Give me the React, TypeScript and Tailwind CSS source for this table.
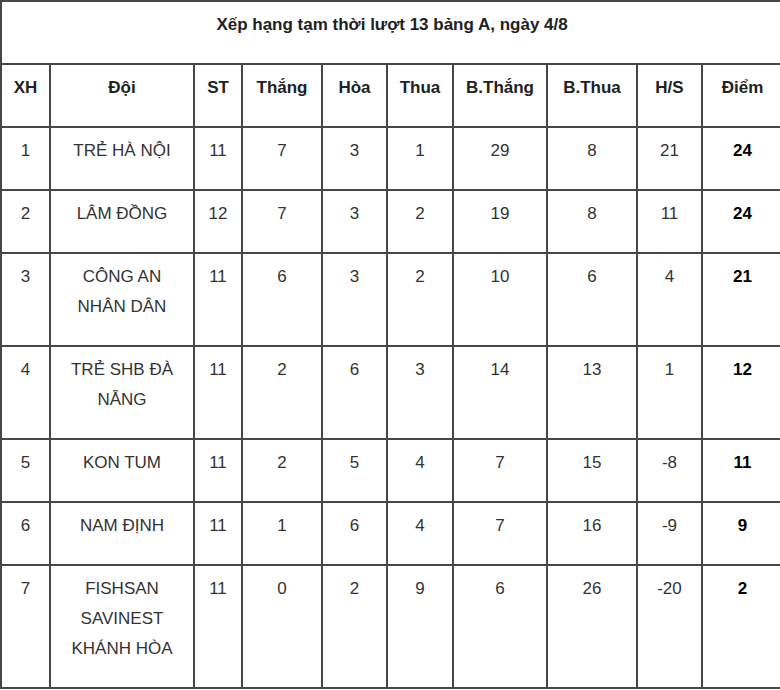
const rows = [
  { xh: "1", doi: ["TRẺ HÀ NỘI"], st: "11", w: "7", d: "3", l: "1", gf: "29", ga: "8", hs: "21", pts: "24" },
  { xh: "2", doi: ["LÂM ĐỒNG"], st: "12", w: "7", d: "3", l: "2", gf: "19", ga: "8", hs: "11", pts: "24" },
  { xh: "3", doi: ["CÔNG AN", "NHÂN DÂN"], st: "11", w: "6", d: "3", l: "2", gf: "10", ga: "6", hs: "4", pts: "21" },
  { xh: "4", doi: ["TRẺ SHB ĐÀ", "NẴNG"], st: "11", w: "2", d: "6", l: "3", gf: "14", ga: "13", hs: "1", pts: "12" },
  { xh: "5", doi: ["KON TUM"], st: "11", w: "2", d: "5", l: "4", gf: "7", ga: "15", hs: "-8", pts: "11" },
  { xh: "6", doi: ["NAM ĐỊNH"], st: "11", w: "1", d: "6", l: "4", gf: "7", ga: "16", hs: "-9", pts: "9" },
  { xh: "7", doi: ["FISHSAN", "SAVINEST", "KHÁNH HÒA"], st: "11", w: "0", d: "2", l: "9", gf: "6", ga: "26", hs: "-20", pts: "2" },
];

const headers = ["XH", "Đội", "ST", "Thắng", "Hòa", "Thua", "B.Thắng", "B.Thua", "H/S", "Điểm"];
const widths = [49, 144, 48, 80, 65, 66, 94, 90, 65, 81];

const cell = "border-2 border-[#474747] align-top text-center px-1 pt-[8px] pb-[23px] leading-[30px]";

export default function App() {
  return (
    <div className="w-[780px] h-[690px] overflow-hidden bg-white" style={{ fontFamily: '"Liberation Sans", Arial, sans-serif' }}>
      <table className="table-fixed border-collapse text-[17px] text-[#333]" style={{ width: 782 }}>
        <colgroup>
          {widths.map((w, i) => (
            <col key={i} style={{ width: w }} />
          ))}
        </colgroup>
        <tbody>
          <tr>
            <td colSpan={10} className={`${cell} font-bold text-[#222]`}>
              Xếp hạng tạm thời lượt 13 bảng A, ngày 4/8
            </td>
          </tr>
          <tr>
            {headers.map((h) => (
              <td key={h} className={`${cell} font-bold text-[#222]`}>
                {h}
              </td>
            ))}
          </tr>
          {rows.map((r) => (
            <tr key={r.xh}>
              <td className={cell}>{r.xh}</td>
              <td className={cell}>
                {r.doi.map((line) => (
                  <div key={line}>{line}</div>
                ))}
              </td>
              <td className={cell}>{r.st}</td>
              <td className={cell}>{r.w}</td>
              <td className={cell}>{r.d}</td>
              <td className={cell}>{r.l}</td>
              <td className={cell}>{r.gf}</td>
              <td className={cell}>{r.ga}</td>
              <td className={cell}>{r.hs}</td>
              <td className={`${cell} font-bold text-black`}>{r.pts}</td>
            </tr>
          ))}
        </tbody>
      </table>
    </div>
  );
}
